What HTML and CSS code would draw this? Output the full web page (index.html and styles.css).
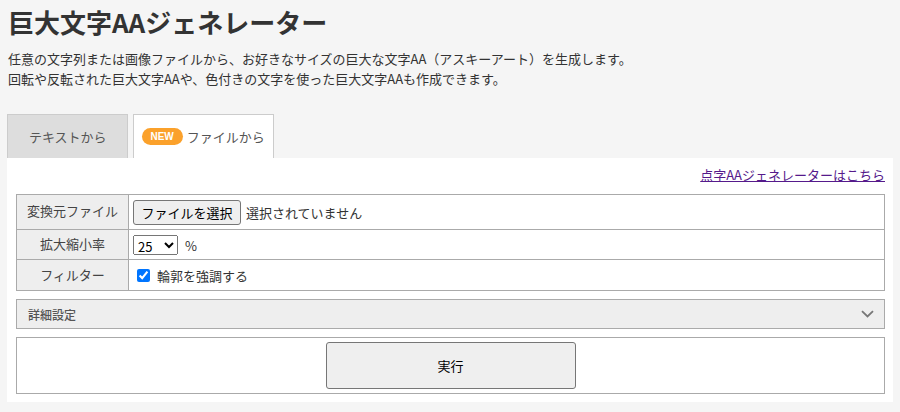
FILE: index.html
```html
<!DOCTYPE html>
<html lang="ja">
<head>
<meta charset="utf-8">
<title>巨大文字AAジェネレーター</title>
<link rel="stylesheet" href="styles.css">
</head>
<body>
<h1 class="title">巨大文字AAジェネレーター</h1>
<p class="lead">任意の文字列または画像ファイルから、お好きなサイズの巨大な文字AA（アスキーアート）を生成します。<br>回転や反転された巨大文字AAや、色付きの文字を使った巨大文字AAも作成できます。</p>

<div class="tabs">
  <div class="tab">テキストから</div>
  <div class="tab tab-active"><span class="badge">NEW</span>ファイルから</div>
</div>

<div class="panel">
  <div class="linkrow"><a class="extlink" href="#">点字AAジェネレーターはこちら</a></div>
  <table class="form">
    <tr class="r1">
      <th>変換元ファイル</th>
      <td><button class="filebtn" type="button">ファイルを選択</button><span class="nofile">選択されていません</span></td>
    </tr>
    <tr class="r2">
      <th>拡大縮小率</th>
      <td><select class="scale"><option>25</option></select><span class="pct">%</span></td>
    </tr>
    <tr class="r3">
      <th>フィルター</th>
      <td><label class="chk"><input type="checkbox" checked><span>輪郭を強調する</span></label></td>
    </tr>
  </table>
  <div class="details">
    <span>詳細設定</span>
    <svg class="chev" width="13" height="8" viewBox="0 0 13 8"><path d="M1 1.2 L6.5 6.5 L12 1.2" fill="none" stroke="#777" stroke-width="1.8"/></svg>
  </div>
  <div class="runbox">
    <button class="runbtn" type="button">実行</button>
  </div>
</div>
</body>
</html>
```
FILE: styles.css
```css
html, body {
  margin: 0;
  padding: 0;
}
body {
  background: #f5f5f5;
  padding: 0 7px;
  font-family: "Noto Sans CJK JP", "Noto Sans", sans-serif;
  color: #333;
  font-size: 13px;
}
.title {
  margin: 6px 0 0 1px;
  font-size: 26px;
  line-height: 32px;
  font-weight: bold;
  color: #333;
}
.lead {
  margin: 11px 0 0 1px;
  font-size: 13px;
  line-height: 19.5px;
  color: #333;
}
.tabs {
  display: flex;
  gap: 5px;
  margin-top: 26px;
}
.tab {
  box-sizing: border-box;
  height: 44px;
  display: flex;
  align-items: center;
  padding: 0 20px 0 21px;
  background: #ddd;
  border: 1px solid #ccc;
  border-bottom: none;
  font-size: 13px;
  color: #555;
}
.tab-active {
  background: #fff;
  padding: 0 8px;
}
.badge {
  display: inline-block;
  background: #fba12b;
  color: #fff;
  font-family: "Liberation Sans", Arial, sans-serif;
  font-weight: bold;
  font-size: 10px;
  line-height: 17px;
  width: 41px;
  text-align: center;
  border-radius: 9px;
  margin-right: 4px;
}
.panel {
  background: #fff;
  padding: 7px 8px 8px 9px;
}
.linkrow {
  text-align: right;
  line-height: 20px;
  font-size: 13px;
}
.extlink {
  color: #551a8b;
  text-decoration: underline;
}
.form {
  width: 100%;
  border-collapse: collapse;
  margin-top: 9px;
}
.form th, .form td {
  border: 1px solid #aaa;
  padding: 0 0 0 4px;
  font-size: 13px;
  vertical-align: middle;
  text-align: left;
}
.form th {
  width: 111px;
  background: #eee;
  font-weight: normal;
  color: #444;
  text-align: center;
  padding: 0;
}
.r1 { height: 35px; }
.r2 { height: 30px; }
.r3 { height: 31px; }
.r1 th { padding-bottom: 4px; }
.r2 th, .r3 th { padding-bottom: 2px; }
.filebtn {
  font-family: inherit;
  font-size: 13px;
  height: 25px;
  width: 108px;
  padding: 0;
  background: #efefef;
  border: 1px solid #767676;
  border-radius: 3px;
  color: #000;
  vertical-align: middle;
}
.nofile {
  margin-left: 5px;
  vertical-align: middle;
  color: #333;
}
.scale {
  font-family: inherit;
  font-size: 13px;
  width: 45px;
  height: 20px;
  vertical-align: middle;
}
.pct {
  margin-left: 7px;
  vertical-align: middle;
}
.chk {
  display: flex;
  align-items: center;
}
.chk input {
  width: 13px;
  height: 13px;
  margin: 0 7px 0 4px;
}
.details {
  box-sizing: border-box;
  margin-top: 8px;
  height: 30px;
  background: #eee;
  border: 1px solid #aaa;
  display: flex;
  align-items: center;
  justify-content: space-between;
  padding: 0 10px 0 11px;
  font-size: 12px;
  font-weight: 500;
  color: #555;
}
.runbox {
  margin-top: 8px;
  border: 1px solid #aaa;
  padding: 4px 0;
  display: flex;
  justify-content: center;
}
.runbtn {
  font-family: inherit;
  font-size: 13px;
  width: 250px;
  height: 47px;
  background: #efefef;
  border: 1px solid #767676;
  border-radius: 3px;
  color: #000;
}
```
